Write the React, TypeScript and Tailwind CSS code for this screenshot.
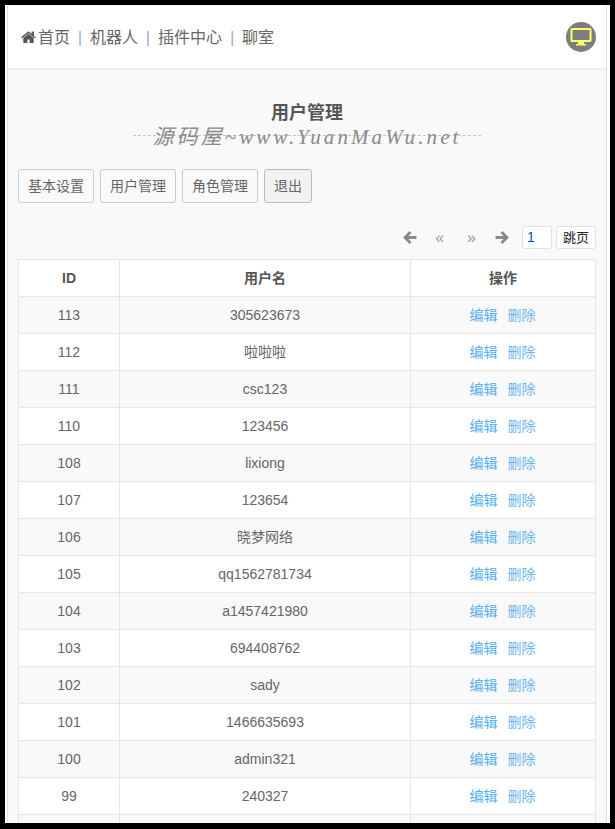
const rows: [string, string][] = [
  ["113", "305623673"],
  ["112", "啦啦啦"],
  ["111", "csc123"],
  ["110", "123456"],
  ["108", "lixiong"],
  ["107", "123654"],
  ["106", "晓梦网络"],
  ["105", "qq1562781734"],
  ["104", "a1457421980"],
  ["103", "694408762"],
  ["102", "sady"],
  ["101", "1466635693"],
  ["100", "admin321"],
  ["99", "240327"],
  ["", ""],
];

const font = "font-['Liberation_Sans','Noto_Sans_CJK_SC',sans-serif]";

const HomeIcon = () => (
  <svg viewBox="0 0 1664 1408" className="w-[15px] h-[13px] fill-[#555]">
    <path d="M1408 768v480q0 26-19 45t-45 19h-384v-384H704v384H320q-26 0-45-19t-19-45V768q0-1 .5-3t.5-3l575-474 575 474q1 2 1 6zm223-69-62 74q-8 9-21 11h-3q-13 0-21-7L832 200 140 777q-12 8-24 7-13-2-21-11l-62-74q-8-10-7-23.500t11-21.500L756 62q32-26 76-26t76 26l272 227V72q0-14 9-23t23-9h192q14 0 23 9t9 23v454l219 182q10 8 11 21.500t-7 23.500z" />
  </svg>
);

const ArrowLeft = ({ flip }: { flip?: boolean }) => (
  <svg viewBox="0 0 14 14" className={flip ? "w-[15px] h-[15px] fill-[#888] -scale-x-100" : "w-[15px] h-[15px] fill-[#888]"}>
    <path d="M7 1 8.800 2.800 6 5.500H13.500V8.500H6L8.800 11.200 7 13 1 7z" />
  </svg>
);

const NavSep = () => <span className="text-[#9fb0c4] text-[17px] mx-[7.800px]">|</span>;

export default function App() {
  return (
    <div className={`${font} w-[615px] h-[829px] bg-black pt-[5px] pl-[5px] pr-[5px] pb-[6px] overflow-hidden`}>
      <div className="h-full bg-white pl-[2px] pr-[3px] overflow-hidden">
        <div className="h-full border-x border-[#e2e2e2] bg-[#f9f9f9] overflow-hidden">
          {/* Top nav */}
          <div className="h-[65px] bg-white border-b-2 border-[#eeeeee] flex items-center justify-between pl-[13px] pr-[10px]">
            <div className="flex items-center pt-[2px] text-[16px] text-[#666]">
              <HomeIcon />
              <span className="ml-[2px]">首页</span>
              <NavSep />
              <span>机器人</span>
              <NavSep />
              <span>插件中心</span>
              <NavSep />
              <span>聊室</span>
            </div>
            <div className="w-[30px] h-[30px] rounded-full bg-[#7d7d7d] flex items-center justify-center">
              <svg viewBox="0 0 22 20" className="w-[22px] h-[20px]">
                <path
                  d="M2 1h18a1.500 1.500 0 0 1 1.500 1.500v11a1.500 1.500 0 0 1-1.500 1.500h-6v2h2v1.500H6V17h2v-2H2a1.500 1.500 0 0 1-1.500-1.500v-11A1.500 1.500 0 0 1 2 1z"
                  fill="#ffff66"
                />
                <rect x="2.500" y="3" width="17" height="10" fill="#7d7d7d" />
              </svg>
            </div>
          </div>

          <div className="px-[10px]">
            {/* Title */}
            <h1 className="mt-[32px] text-center text-[18px] leading-[22px] font-bold text-[#555]">用户管理</h1>
            <div className="relative mx-auto mt-[1px] w-[348px] h-[24px] flex items-center justify-center">
              <div className="absolute inset-x-0 top-[10px] border-t border-dashed border-[#c4c4c4]" />
              <span className="relative font-['Liberation_Serif','Noto_Sans_CJK_SC',serif] italic text-[21px] leading-[24px] tracking-[3.100px] text-[#8a8a8a] whitespace-nowrap">
                源码屋~www.YuanMaWu.net
              </span>
            </div>

            {/* Tabs */}
            <div className="mt-[20px] flex gap-[6px]">
              {["基本设置", "用户管理", "角色管理"].map((t) => (
                <button key={t} className="h-[34px] w-[76px] rounded-[3px] border border-[#cccccc] bg-[#f9f9f9] text-[14px] text-[#666]">
                  {t}
                </button>
              ))}
              <button className="h-[34px] w-[48px] rounded-[3px] border border-[#bbbbbb] bg-[#f2f2f2] text-[14px] text-[#666]">退出</button>
            </div>

            {/* Pager */}
            <div className="mt-[23px] flex items-center justify-end h-[23px]">
              <ArrowLeft />
              <span className="ml-[18px] text-[16px] text-[#999] leading-none">«</span>
              <span className="ml-[23px] text-[16px] text-[#999] leading-none">»</span>
              <span className="ml-[19px]"><ArrowLeft flip /></span>
              <div className="ml-[12px] w-[30px] h-[23px] rounded-[3px] border border-[#e2e2e2] bg-white text-[14px] leading-[21px] pl-[4px] text-[#0b4fa8]">1</div>
              <button className="ml-[4px] w-[40px] h-[23px] rounded-[3px] border border-[#e2e2e2] bg-white text-[13px] leading-[21px] text-[#222]">跳页</button>
            </div>

            {/* Table */}
            <table className="mt-[10px] w-[578px] table-fixed border-collapse text-[14px] text-[#666] text-center">
              <thead>
                <tr className="h-[37px] bg-white">
                  <th className="w-[101px] border border-[#e6e6e6] font-bold text-[#555]">ID</th>
                  <th className="w-[291px] border border-[#e6e6e6] font-bold text-[#555]">用户名</th>
                  <th className="border border-[#e6e6e6] font-bold text-[#555]">操作</th>
                </tr>
              </thead>
              <tbody>
                {rows.map(([id, name], i) => (
                  <tr key={i} className={i % 2 === 0 ? "h-[37px] bg-[#f9f9f9]" : "h-[37px] bg-white"}>
                    <td className="border border-[#e6e6e6]">{id}</td>
                    <td className="border border-[#e6e6e6]">{name}</td>
                    <td className="border border-[#e6e6e6] pr-[1px]">
                      {id && (
                        <span className="text-[#55aef5]">
                          编辑<span className="ml-[10px] text-[#6cb6f0]">删除</span>
                        </span>
                      )}
                    </td>
                  </tr>
                ))}
              </tbody>
            </table>
          </div>
        </div>
      </div>
    </div>
  );
}
